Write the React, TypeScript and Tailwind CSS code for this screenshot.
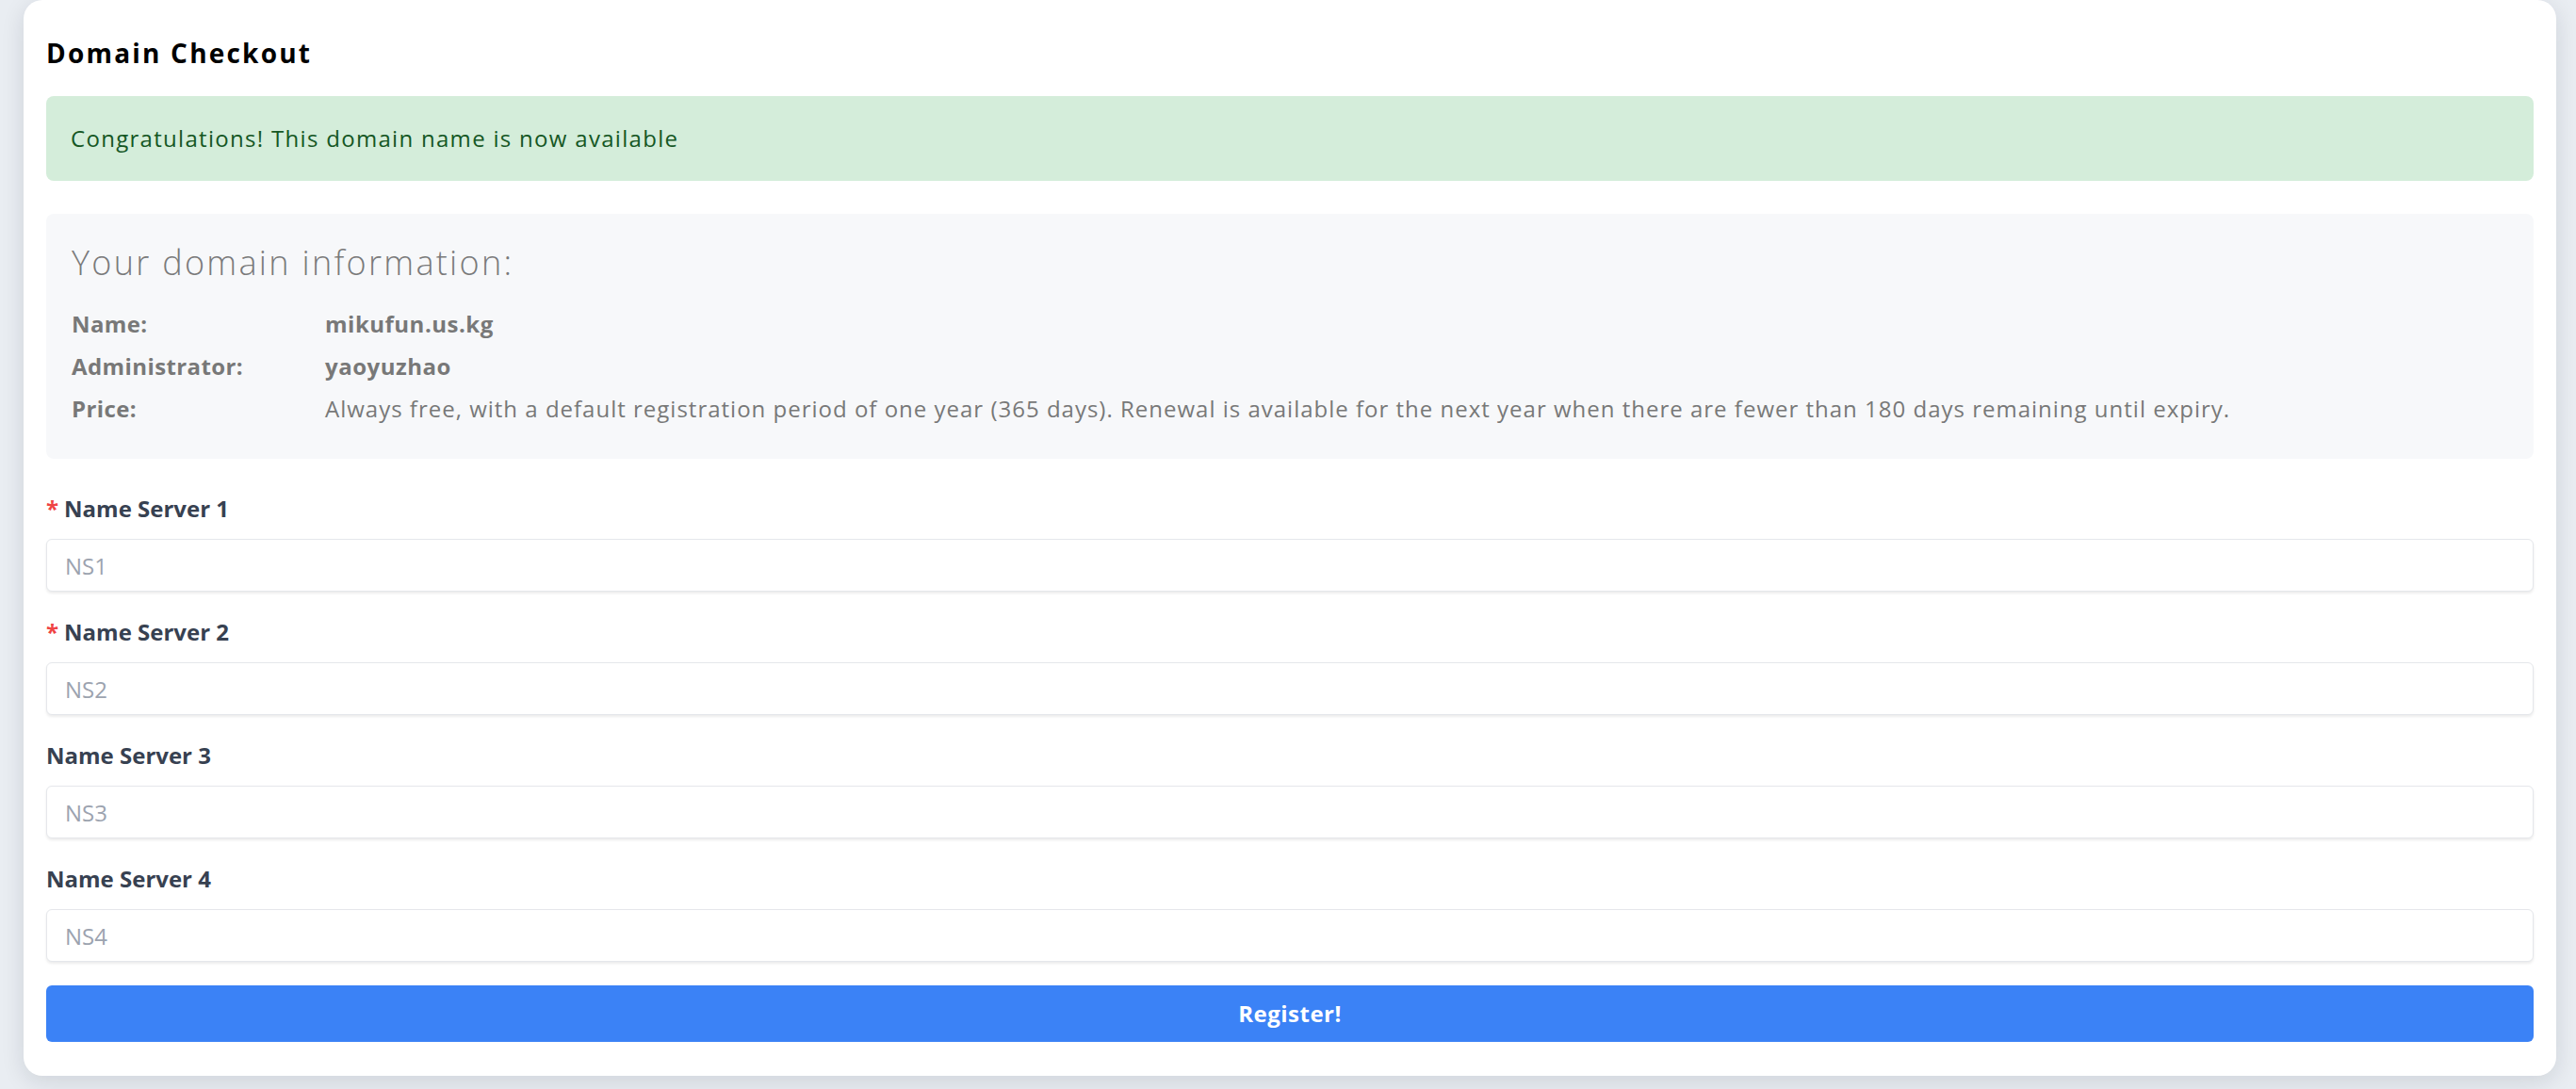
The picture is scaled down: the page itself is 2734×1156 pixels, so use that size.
const fields = [
  { label: "Name Server 1", placeholder: "NS1", required: true },
  { label: "Name Server 2", placeholder: "NS2", required: true },
  { label: "Name Server 3", placeholder: "NS3", required: false },
  { label: "Name Server 4", placeholder: "NS4", required: false },
];

const info = [
  { key: "Name:", value: "mikufun.us.kg", bold: true },
  { key: "Administrator:", value: "yaoyuzhao", bold: true },
  {
    key: "Price:",
    value:
      "Always free, with a default registration period of one year (365 days). Renewal is available for the next year when there are fewer than 180 days remaining until expiry.",
    bold: false,
  },
];

const App = () => {
  return (
    <div className="min-h-screen w-full bg-[#e9edf2] font-['Open_Sans',sans-serif]">
      <div className="ml-[25px] mr-[21px] rounded-[20px] bg-white px-6 pt-[38px] pb-9 shadow-[0_6px_24px_rgba(15,23,42,0.12)]">
        <h2 className="text-[28px] leading-[36px] font-bold tracking-[2.2px] text-black">
          Domain Checkout
        </h2>

        <div className="mt-7 flex h-[90px] items-center rounded-[8px] bg-[#d4edda] px-[26px] text-[24px] tracking-[1.3px] text-[#155724]">
          Congratulations! This domain name is now available
        </div>

        <div className="mt-[35px] rounded-[8px] bg-[#f7f8fa] pt-[30px] pb-[31px] pl-[27px] pr-6">
          <h3 className="text-[36px] leading-[44px] font-light tracking-[2.3px] text-[#7a7a7a]">
            Your domain information:
          </h3>
          <div className="mt-5 grid grid-cols-[269px_1fr] text-[24px] leading-[45px] text-[#787878]">
            {info.map((row) => (
              <div key={row.key} className="contents">
                <span className="font-bold tracking-[0.4px]">{row.key}</span>
                <span
                  className={
                    row.bold
                      ? "font-bold tracking-[0.5px]"
                      : "font-normal tracking-[1px]"
                  }
                >
                  {row.value}
                </span>
              </div>
            ))}
          </div>
        </div>

        <div className="mt-[37px] flex flex-col gap-[27px]">
          {fields.map((f) => (
            <div key={f.label} className="flex flex-col gap-4">
              <label className="flex items-center text-[24px] leading-[32px] font-bold text-[#374151]">
                {f.required && (
                  <span className="mr-[6px] text-[#ef4444]">*</span>
                )}
                {f.label}
              </label>
              <input
                type="text"
                placeholder={f.placeholder}
                className="h-[56px] w-full rounded-[6px] border border-[#e5e7eb] bg-white px-[19px] text-[24px] text-[#374151] shadow-[0_2px_3px_rgba(0,0,0,0.08)] outline-none placeholder:text-[#9ca3af]"
              />
            </div>
          ))}
        </div>

        <button className="mt-[25px] h-[60px] w-full rounded-[6px] bg-[#3b82f6] text-[24px] font-bold tracking-[0.5px] text-white">
          Register!
        </button>
      </div>
    </div>
  );
};

export default App;
